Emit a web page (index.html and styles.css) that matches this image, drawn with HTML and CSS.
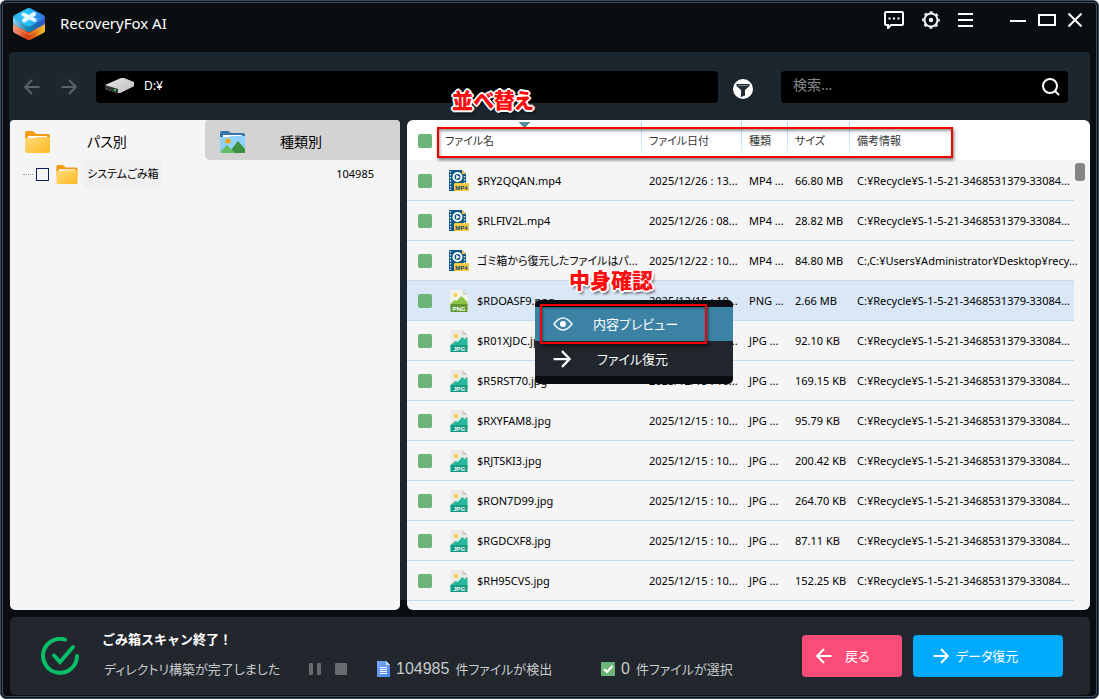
FILE: index.html
```html
<!DOCTYPE html>
<html lang="ja">
<head>
<meta charset="utf-8">
<title>RecoveryFox AI</title>
<link rel="stylesheet" href="styles.css">
</head>
<body>
<svg class="gradients" aria-hidden="true">
  <defs>
    <linearGradient id="g-folder" x1="0" y1="0" x2="1" y2="1"><stop offset="0" stop-color="#ffdc80"/><stop offset="1" stop-color="#ffb91f"/></linearGradient>
    <linearGradient id="g-top" x1="0" y1="0" x2="1" y2="0"><stop offset="0" stop-color="#35b4f4"/><stop offset=".45" stop-color="#27c4fa"/><stop offset="1" stop-color="#2f6fe0"/></linearGradient>
    <linearGradient id="g-side" x1="0" y1="0" x2="1" y2="0"><stop offset="0" stop-color="#8fd6f0"/><stop offset=".45" stop-color="#1685b4"/><stop offset=".6" stop-color="#1278b0"/><stop offset="1" stop-color="#3450c4"/></linearGradient>
    <linearGradient id="g-base" x1="0" y1="0" x2="1" y2="0"><stop offset="0" stop-color="#f39a8a"/><stop offset=".45" stop-color="#d8400f"/><stop offset=".65" stop-color="#de6414"/><stop offset="1" stop-color="#f2cd2c"/></linearGradient>
    <linearGradient id="g-doc" x1="0" y1="0" x2="1" y2="1"><stop offset="0" stop-color="#78aaf8"/><stop offset="1" stop-color="#4a86ee"/></linearGradient>
    <linearGradient id="g-drive" x1="0" y1="0" x2="1" y2="1"><stop offset="0" stop-color="#eeeeee"/><stop offset="1" stop-color="#b4b4b6"/></linearGradient>
  </defs>
</svg>
<svg class="sprite" aria-hidden="true">
  <symbol id="folder" viewBox="0 0 25 22">
    <path d="M0 2Q0 0 2 0H8L11 3H23Q25 3 25 5V12H0Z" fill="#f59b12"/>
    <path d="M3 5H22V9H3Z" fill="#fff"/>
    <path d="M0 8Q0 7 1 7H9L11 6H24Q25 6 25 7V20Q25 22 23 22H2Q0 22 0 20Z" fill="url(#g-folder)"/>
  </symbol>
  <symbol id="pictures" viewBox="0 0 25 22">
    <path d="M0 2Q0 0 2 0H8L11 2H23Q25 2 25 4V12H0Z" fill="#3874ae"/>
    <path d="M3 4H22V8H3Z" fill="#fff"/>
    <path d="M0 6H9L11 5H25V20Q25 22 23 22H2Q0 22 0 20Z" fill="#91d2fb"/>
    <circle cx="8" cy="10" r="2.6" fill="#f7a50c"/>
    <path d="M9 22L17 11Q18 10 19 11L25 18V22Z" fill="#3c9040"/>
    <path d="M0 21L6 15Q7 14 8 15L15 22H2Z" fill="#62bd63"/>
  </symbol>
  <symbol id="mp4" viewBox="0 0 20 23">
    <path d="M0 1H13L17 5V22H0Z" fill="#0e5684"/>
    <path d="M13 1L17 5H13Z" fill="#f6c945"/>
    <path d="M1.500 2V21M15.500 7V14" stroke="#d8edf7" stroke-width="1.300" stroke-dasharray="1.500 1.500"/>
    <circle cx="8.500" cy="8" r="4" fill="#0e5684" stroke="#fff" stroke-width="2"/>
    <path d="M7.200 5.800V10.200L10.800 8Z" fill="#fff"/>
    <rect x="5" y="14" width="15" height="8" rx="1" fill="#f8cb45"/>
    <text x="12.500" y="20.500" text-anchor="middle" class="tag tag-blue">MP4</text>
  </symbol>
  <symbol id="jpg" viewBox="0 0 17 22">
    <path d="M0 1Q0 0 1 0H12L17 5V14H0Z" fill="#e9e9df"/>
    <path d="M12 0L17 5H13Q12 5 12 4Z" fill="#cfcfc4"/>
    <circle cx="5.500" cy="6" r="2" fill="#f6cd3e"/>
    <path d="M0 15L5 11L7 12L12 7L14 9L17 7V18H0Z" fill="#28b99a"/>
    <path d="M0 15H17V22H0Z" fill="#159b80"/>
    <text x="8.800" y="20.800" text-anchor="middle" class="tag">JPG</text>
  </symbol>
  <symbol id="png" viewBox="0 0 17 22">
    <path d="M0 1Q0 0 1 0H12L17 5V14H0Z" fill="#f5f4e9"/>
    <path d="M12 0L17 5H13Q12 5 12 4Z" fill="#d4d8cc"/>
    <circle cx="5" cy="5" r="2" fill="#f6cd3e"/>
    <path d="M0 14L4 10L6 11L11 6L17 12V18H0Z" fill="#8dc448"/>
    <path d="M0 14H17V22H0Z" fill="#60982f"/>
    <text x="8.500" y="20.600" text-anchor="middle" class="tag">PNG</text>
  </symbol>
  <symbol id="left" viewBox="0 0 16 16"><path d="M15.500 8H1.500M8 1L1.200 8L8 15" fill="none" stroke="currentColor" stroke-width="2"/></symbol>
  <symbol id="right" viewBox="0 0 16 16"><path d="M.5 8H14.500M8 1L14.800 8L8 15" fill="none" stroke="currentColor" stroke-width="2"/></symbol>
</svg>

<div class="window">
  <header class="titlebar">
    <svg class="logo" viewBox="0 0 32 32" aria-hidden="true">
      <path d="M0 16L16 23L32 15V22Q32 24 30.500 25L18 31.500Q16 32.500 14 31.500L1.500 25Q0 24 0 22Z" fill="url(#g-base)"/>
      <path d="M0 17.500L14 25Q16 26 18 25L32 17V18L18 26Q16 27 14 26L0 18.500Z" fill="#ffab7c" opacity=".6"/>
      <path d="M0 9H32V14.500Q32 16 30.500 17L18 23.500Q16 24.500 14 23.500L1.500 17Q0 16 0 14.500Z" fill="url(#g-side)"/>
      <path d="M14 .6Q16-.4 18 .6L30.500 7Q33 9 30.500 11L18 18Q16 19 14 18L1.500 11Q-1 9 1.500 7Z" fill="url(#g-top)"/>
      <path d="M10.500 6.500L21.500 12M21 6L11 12.500" stroke="#e4f9ff" stroke-width="4" stroke-linecap="round"/>
    </svg>
    <h1 class="app-name">RecoveryFox AI</h1>
    <div class="tools">
      <button class="bare" aria-label="フィードバック"><svg width="20" height="18" viewBox="0 0 20 18" fill="none" stroke="#fff" stroke-width="2"><path d="M2 1H18Q19 1 19 2V13Q19 14 18 14H7L4 17V14H2Q1 14 1 13V2Q1 1 2 1Z"/><path d="M4.500 7.500H6.500M9 7.500H11M13.500 7.500H15.500"/></svg></button>
      <button class="bare" aria-label="設定"><svg width="18" height="18" viewBox="0 0 18 18" fill="none" stroke="#f4f4f4"><circle cx="9" cy="9" r="6.500" stroke-width="2"/><circle cx="9" cy="9" r="8" stroke-width="1.600" stroke-dasharray="3.100 3.183" stroke-dashoffset="1.500"/><circle cx="9" cy="9" r="1.200" stroke-width="2"/></svg></button>
      <button class="bare" aria-label="メニュー"><svg width="15" height="16" viewBox="0 0 15 16" stroke="#fff" stroke-width="2"><path d="M0 2H15M0 8H15M0 14H15"/></svg></button>
    </div>
    <div class="window-buttons">
      <button class="bare" aria-label="最小化"><svg width="16" height="16" viewBox="0 0 16 16"><path d="M0 9H16" stroke="#fff" stroke-width="2"/></svg></button>
      <button class="bare" aria-label="最大化"><svg width="18" height="14" viewBox="0 0 18 14"><rect x="1" y="2" width="16" height="10" fill="none" stroke="#fff" stroke-width="2"/></svg></button>
      <button class="bare" aria-label="閉じる"><svg width="14" height="14" viewBox="0 0 14 14"><path d="M.5 .5L13.500 13.500M13.500 .5L.5 13.500" stroke="#fff" stroke-width="2"/></svg></button>
    </div>
  </header>

  <main class="main">
    <div class="toolbar">
      <button class="nav" aria-label="戻る"><svg width="16" height="16"><use href="#left"/></svg></button>
      <button class="nav" aria-label="進む"><svg width="16" height="16"><use href="#right"/></svg></button>
      <div class="path">
        <svg width="30" height="16" viewBox="0 0 30 16" aria-hidden="true"><path d="M0 7L16 0H19L29 4V8L15 15H12L0 11Z" fill="url(#g-drive)"/><path d="M0 7L13 11V15H12L0 11Z" fill="#303234"/><path d="M13 10L29 4V8L15 15H13Z" fill="#cbccd0"/><rect x="9" y="11" width="2" height="2" fill="#2fd14a"/></svg>
        <span>D:¥</span>
      </div>
      <button class="filter" aria-label="フィルター"><svg width="20" height="20" viewBox="0 0 20 20"><circle cx="10" cy="10" r="10" fill="#fff"/><path d="M3.500 5H16.500V7L12 11V16.500L8 18V11L3.500 7Z" fill="#222d35"/><path d="M5 6.500H15" stroke="#7b858c"/></svg></button>
      <div class="search">
        <input class="search-input" type="text" placeholder="検索..." aria-label="検索">
        <button class="bare" aria-label="検索する"><svg width="18" height="18" viewBox="0 0 18 18" fill="none" stroke="#fff" stroke-width="2"><circle cx="8" cy="8" r="7"/><path d="M13 13L17 17"/></svg></button>
      </div>
    </div>

    <div class="panels">
      <aside class="sidebar">
        <div class="tabs">
          <button class="tab"><svg width="25" height="22"><use href="#folder"/></svg><span>パス別</span></button>
          <button class="tab tab-idle"><svg width="25" height="22"><use href="#pictures"/></svg><span>種類別</span></button>
        </div>
        <div class="tree-row">
          <span class="branch"></span>
          <input class="tree-check" type="checkbox" id="trash">
          <svg width="22" height="19" viewBox="0 0 25 22" aria-hidden="true"><use href="#folder"/></svg>
          <label class="tree-name" for="trash">システムごみ箱</label>
          <span class="tree-count">104985</span>
        </div>
      </aside>

      <section class="files">
        <table class="table">
          <colgroup><col class="c-check"><col><col class="c-date"><col class="c-kind"><col class="c-size"><col class="c-info"></colgroup>
          <thead>
            <tr><th><input class="check" type="checkbox" aria-label="すべて選択"></th><th class="sorted">ファイル名</th><th class="split">ファイル日付</th><th class="split">種類</th><th class="split">サイズ</th><th class="split">備考情報</th></tr>
          </thead>
          <tbody>
            <tr><td><input class="check" type="checkbox" aria-label="$RY2QQAN.mp4"></td><td><div class="file"><svg width="20" height="23"><use href="#mp4"/></svg><span>$RY2QQAN.mp4</span></div></td><td>2025/12/26 : 13...</td><td>MP4 ...</td><td>66.80 MB</td><td>C:¥Recycle¥S-1-5-21-3468531379-33084...</td></tr>
            <tr><td><input class="check" type="checkbox" aria-label="$RLFIV2L.mp4"></td><td><div class="file"><svg width="20" height="23"><use href="#mp4"/></svg><span>$RLFIV2L.mp4</span></div></td><td>2025/12/26 : 08...</td><td>MP4 ...</td><td>28.82 MB</td><td>C:¥Recycle¥S-1-5-21-3468531379-33084...</td></tr>
            <tr><td><input class="check" type="checkbox" aria-label="ゴミ箱から復元したファイル"></td><td><div class="file"><svg width="20" height="23"><use href="#mp4"/></svg><span>ゴミ箱から復元したファイルはパ...</span></div></td><td>2025/12/22 : 10...</td><td>MP4 ...</td><td>84.80 MB</td><td>C:,C:¥Users¥Administrator¥Desktop¥recy...</td></tr>
            <tr class="selected"><td><input class="check" type="checkbox" aria-label="$RDOASF9.png"></td><td><div class="file"><svg width="20" height="22"><use href="#png"/></svg><span>$RDOASF9.png</span></div></td><td>2025/12/15 : 10...</td><td>PNG ...</td><td>2.66 MB</td><td>C:¥Recycle¥S-1-5-21-3468531379-33084...</td></tr>
            <tr><td><input class="check" type="checkbox" aria-label="$R01XJDC.jpg"></td><td><div class="file"><svg width="20" height="22"><use href="#jpg"/></svg><span>$R01XJDC.jpg</span></div></td><td>2025/12/15 : 10...</td><td>JPG ...</td><td>92.10 KB</td><td>C:¥Recycle¥S-1-5-21-3468531379-33084...</td></tr>
            <tr><td><input class="check" type="checkbox" aria-label="$R5RST70.jpg"></td><td><div class="file"><svg width="20" height="22"><use href="#jpg"/></svg><span>$R5RST70.jpg</span></div></td><td>2025/12/15 : 10...</td><td>JPG ...</td><td>169.15 KB</td><td>C:¥Recycle¥S-1-5-21-3468531379-33084...</td></tr>
            <tr><td><input class="check" type="checkbox" aria-label="$RXYFAM8.jpg"></td><td><div class="file"><svg width="20" height="22"><use href="#jpg"/></svg><span>$RXYFAM8.jpg</span></div></td><td>2025/12/15 : 10...</td><td>JPG ...</td><td>95.79 KB</td><td>C:¥Recycle¥S-1-5-21-3468531379-33084...</td></tr>
            <tr><td><input class="check" type="checkbox" aria-label="$RJTSKI3.jpg"></td><td><div class="file"><svg width="20" height="22"><use href="#jpg"/></svg><span>$RJTSKI3.jpg</span></div></td><td>2025/12/15 : 10...</td><td>JPG ...</td><td>200.42 KB</td><td>C:¥Recycle¥S-1-5-21-3468531379-33084...</td></tr>
            <tr><td><input class="check" type="checkbox" aria-label="$RON7D99.jpg"></td><td><div class="file"><svg width="20" height="22"><use href="#jpg"/></svg><span>$RON7D99.jpg</span></div></td><td>2025/12/15 : 10...</td><td>JPG ...</td><td>264.70 KB</td><td>C:¥Recycle¥S-1-5-21-3468531379-33084...</td></tr>
            <tr><td><input class="check" type="checkbox" aria-label="$RGDCXF8.jpg"></td><td><div class="file"><svg width="20" height="22"><use href="#jpg"/></svg><span>$RGDCXF8.jpg</span></div></td><td>2025/12/15 : 10...</td><td>JPG ...</td><td>87.11 KB</td><td>C:¥Recycle¥S-1-5-21-3468531379-33084...</td></tr>
            <tr><td><input class="check" type="checkbox" aria-label="$RH95CVS.jpg"></td><td><div class="file"><svg width="20" height="22"><use href="#jpg"/></svg><span>$RH95CVS.jpg</span></div></td><td>2025/12/15 : 10...</td><td>JPG ...</td><td>152.25 KB</td><td>C:¥Recycle¥S-1-5-21-3468531379-33084...</td></tr>
          </tbody>
        </table>
        <div class="scroll"><div class="thumb"></div></div>

        <div class="menu">
          <button class="menu-item menu-active"><svg width="20" height="14" viewBox="0 0 20 14"><path d="M1 7Q10-5 19 7Q10 19 1 7Z" fill="none" stroke="#e8f2f8" stroke-width="1.600"/><circle cx="10" cy="7" r="3" fill="#fff"/></svg><span>内容プレビュー</span></button>
          <button class="menu-item"><svg width="18" height="18"><use href="#right"/></svg><span>ファイル復元</span></button>
        </div>
        <div class="mark mark-header"></div>
        <div class="mark mark-menu"></div>
        <div class="note note-sort">並べ替え</div>
        <div class="note note-preview">中身確認</div>
      </section>
    </div>
  </main>

  <footer class="footer">
    <svg class="done" viewBox="0 0 38 38" aria-hidden="true" fill="none" stroke="#06bf66" stroke-width="4" stroke-linecap="round"><path d="M24 2.600A17 17 0 1 0 36 19"/><path d="M13 18.500L19 25L32 10"/></svg>
    <div class="status">
      <strong class="status-title">ごみ箱スキャン終了！</strong>
      <div class="status-line">
        <span class="status-text">ディレクトリ構築が完了しました</span>
        <button class="bare pause" aria-label="一時停止"><svg width="12" height="12"><rect width="4" height="12" rx="1" fill="#686b6d"/><rect x="8" width="4" height="12" rx="1" fill="#686b6d"/></svg></button>
        <button class="bare stop" aria-label="停止"><svg width="12" height="12"><rect width="12" height="12" rx="1" fill="#686b6d"/></svg></button>
        <span class="stat found"><svg width="13" height="16" viewBox="0 0 13 16"><path d="M0 0H9L13 4V16H0Z" fill="url(#g-doc)"/><path d="M9 0L13 4H9Z" fill="#d5e4ff"/><path d="M3 6.500H10M3 8.500H10M3 10.500H10M3 12.500H10" stroke="#fff" stroke-width="1"/></svg><span class="num">104985</span><span>件ファイルが検出</span></span>
        <span class="stat"><svg width="14" height="14" viewBox="0 0 14 14"><rect width="14" height="14" rx="1" fill="#6bb576"/><path d="M3 7L6 10L11.500 4" fill="none" stroke="#fff" stroke-width="2.200"/></svg><span class="num">0</span><span>件ファイルが選択</span></span>
      </div>
    </div>
    <div class="actions">
      <button class="action back"><svg width="16" height="16"><use href="#left"/></svg><span>戻る</span></button>
      <button class="action recover"><svg width="16" height="16"><use href="#right"/></svg><span>データ復元</span></button>
    </div>
  </footer>
</div>
</body>
</html>
```

FILE: styles.css
```css
* { box-sizing: border-box; }
body {
  margin: 0;
  background: #fff;
  color: #000;
  font: 11px/16px "Noto Sans", "Noto Sans CJK JP", sans-serif;
  font-feature-settings: "palt";
}
button, input { font: inherit; font-feature-settings: inherit; color: inherit; margin: 0; }
button { border: 0; padding: 0; background: none; }
svg { display: block; flex: none; }
.gradients { position: absolute; width: 0; height: 0; }
.sprite { display: none; }
.tag { font: bold 6px "Liberation Sans", sans-serif; fill: #fff; }
.tag-blue { fill: #0e4670; }
.bare { display: flex; }

.window {
  display: flex;
  flex-direction: column;
  min-height: 100vh;
  padding: 1px;
  border: 3px double #3f4c5d;
  border-radius: 6px;
  background: #0a0e11;
}
.titlebar {
  display: flex;
  align-items: flex-start;
  height: 48px;
  padding: 4px 13px 0 9px;
}
.logo { width: 32px; height: 32px; }
.app-name { flex: 1; margin: 4px 0 0 15px; font-size: 15px; line-height: 22px; font-weight: 400; color: #fff; }
.tools { display: flex; align-items: center; gap: 18px; height: 24px; }
.window-buttons { display: flex; align-items: center; gap: 12px; height: 24px; margin-left: 37px; }

.main {
  display: flex;
  flex: 1;
  flex-direction: column;
  margin: 0 5px;
  border-radius: 4px 4px 0 0;
  background: linear-gradient(#1b262e, #1b262e) top / 100% calc(100% - 10px) no-repeat;
}
.toolbar { display: flex; align-items: center; height: 68px; padding: 2px 22px 0 10px; }
.nav { display: grid; place-items: center; width: 26px; height: 26px; margin-right: 11px; background: #1e272e; color: #59636a; }
.path {
  display: flex;
  flex: 1;
  align-items: center;
  gap: 9px;
  height: 32px;
  margin: 0 10px 0 3px;
  padding: 0 9px 2px;
  border-radius: 4px;
  background: #000;
  color: #fff;
  font-size: 12px;
}
.filter { display: grid; place-items: center; width: 30px; height: 30px; margin: 4px 23px 0 0; background: #1c242c; }
.search { display: flex; align-items: center; width: 287px; height: 32px; padding: 0 8px 0 12px; border-radius: 4px; background: #000; }
.search-input { flex: 1; min-width: 0; padding: 0 0 4px; border: 0; outline: 0; background: none; font-size: 14px; }
.search-input::placeholder { color: #85878a; opacity: 1; }

.panels { display: flex; flex: 1; gap: 7px; padding-left: 1px; }
.sidebar { width: 390px; border-radius: 4px 4px 5px 5px; background: #f5f5f5; overflow: hidden; }
.tabs { display: grid; grid-template-columns: 1fr 1fr; height: 40px; }
.tab { display: flex; align-items: center; gap: 37px; padding: 4px 15px 0; font-size: 14px; line-height: 22px; }
.tab-idle { border-radius: 4px 4px 0 5px; background: #d3d3d3; gap: 35px; }
.tree-row { display: flex; align-items: center; height: 28px; padding: 0 26px 0 13px; }
.branch { width: 10px; margin-right: 3px; border-top: 1px dotted #999; }
.tree-check { appearance: none; width: 13px; height: 13px; margin-right: 7px; border: 1px solid #0c1d5c; background: #f5f5f5; }
.tree-name { margin-left: 6px; padding: 0 3px; background: #f0f0f0; line-height: 28px; }
.tree-count { margin-left: auto; }

.files { position: relative; display: flex; flex: 1; min-width: 0; border-radius: 6px; background: linear-gradient(#fff 40px, #f5f5f5 40px); }
.table { flex: 1; min-width: 0; align-self: flex-start; border-collapse: separate; border-spacing: 0; table-layout: fixed; width: 100%; }
.c-check { width: 30px; }
.c-date { width: 100px; }
.c-kind { width: 46px; }
.c-size { width: 62px; }
.c-info { width: 225px; }
th { height: 41px; padding: 0 0 0 8px; text-align: left; font-weight: 400; color: #333; white-space: nowrap; }
td { height: 40px; padding: 0 0 0 8px; border-bottom: 1px solid #c3d8ee; white-space: nowrap; }
th:first-child, td:first-child { padding-left: 11px; }
.split { background: linear-gradient(#9ddcf0, #e2f5fa) left 2px / 1px 32px no-repeat; }
.sorted { background: conic-gradient(from 315deg at 50% 100%, #568f9b 90deg, transparent 0) 82px 2px / 12px 6px no-repeat; }
.check { display: block; appearance: none; width: 14px; height: 14px; border-radius: 2px; background: #6cb478; }
.selected { background: #dae7f7; }
.file { display: flex; align-items: center; gap: 8px; padding-left: 4px; }
.scroll { width: 16px; padding: 43px 4px 0 1px; }
.thumb { width: 10px; height: 18px; border-radius: 3px; background: #858585; }

.menu { position: absolute; top: 180px; left: 128px; width: 198px; padding: 7px 0 8px; border-radius: 5px; background: #0a0e11; }
.menu-item { display: flex; align-items: center; gap: 26px; width: 100%; height: 35px; padding-left: 18px; background: #20262c; color: #fff; font-size: 13px; line-height: 20px; }
.menu-active { gap: 20px; background: #3c82a5; height: 34px; }
.mark { position: absolute; border: 2px solid #f00000; box-shadow: 1px 2px 3px #0008, inset 1px 2px 3px #0006; pointer-events: none; }
.mark-header { top: 7px; left: 30px; width: 516px; height: 31px; }
.mark-menu { top: 184px; left: 133px; width: 167px; height: 40px; }
.note {
  position: absolute;
  color: #fb0d10;
  font-weight: 900;
  font-size: 21px;
  line-height: 24px;
  white-space: nowrap;
  text-shadow: 2px 0 #fff, -2px 0 #fff, 0 2px #fff, 0 -2px #fff, 1px 1px #fff, -1px 1px #fff, 1px -1px #fff, -1px -1px #fff, 2px 3px 3px #000a;
}
.note-sort { top: -32px; left: 45px; }
.note-preview { top: 148px; left: 162px; }

.footer {
  display: flex;
  align-items: center;
  height: 78px;
  margin: 7px 5px 0 6px;
  padding: 0 27px 0 31px;
  border-radius: 5px;
  background: #21272d;
}
.done { width: 38px; height: 38px; }
.status { flex: 1; display: grid; gap: 8px; margin: 0 0 4px 23px; color: #c8cacc; font-size: 13px; line-height: 22px; white-space: nowrap; }
.status-title { color: #fff; font-size: 13px; font-feature-settings: normal; }
.status-line { display: flex; align-items: center; padding-left: 2px; }
.status-text { width: 178px; }
.pause { margin-left: 27px; }
.stop { margin-left: 14px; }
.stat { display: flex; align-items: center; gap: 6px; }
.found { width: 194px; margin: 0 30px; }
.num { font: 16px/22px "Liberation Sans", sans-serif; }
.actions { display: flex; gap: 11px; }
.action { display: flex; align-items: center; height: 42px; border-radius: 4px; color: #fff; font-size: 13px; line-height: 20px; }
.back { width: 100px; padding-left: 14px; gap: 13px; background: #fa4d78; }
.recover { width: 150px; padding-left: 20px; gap: 7px; background: #00aaff; }
```
